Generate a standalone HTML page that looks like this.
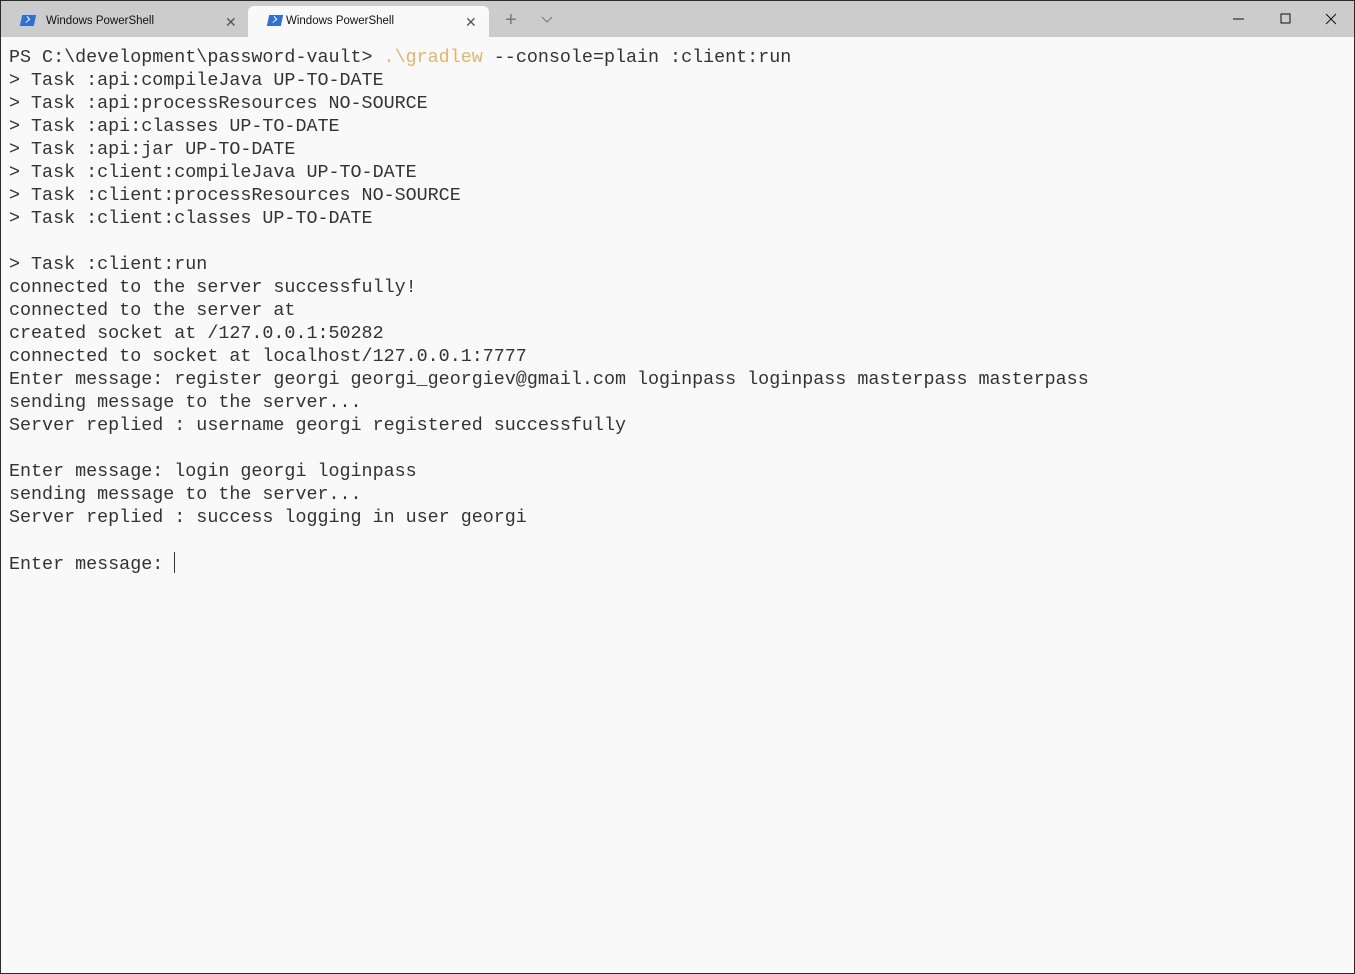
<!DOCTYPE html>
<html><head><meta charset="utf-8"><style>
html,body{margin:0;padding:0}
body{width:1355px;height:974px;position:relative;overflow:hidden;background:#2b2b2b;font-family:"Liberation Sans",sans-serif}
#win{position:absolute;left:1px;top:1px;width:1353px;height:972px;background:#f9f9f9}
#bar{position:absolute;left:0;top:0;width:1353px;height:36px;background:#cccccc}
.tab{position:absolute;top:5px;height:31px;font-size:11.5px;color:#111}
.tab .t{position:absolute;left:45px;top:9px}
.tab .x{position:absolute;top:8px;font-size:14px;color:#555}
#t2{left:247px;width:241px;background:#f9f9f9;border-radius:6px 6px 0 0}
#t1{left:0;width:246px}
.ic{position:absolute;left:20px;top:9px;width:14px;height:11px;background:#2f6fd6;transform:skewX(-12deg)}
.ic:after{content:"";position:absolute;left:3px;top:2px;width:4px;height:4px;border-right:1.5px solid #fff;border-bottom:1.5px solid #fff;transform:rotate(-45deg)}
pre{position:absolute;left:8px;top:45px;margin:0;font-family:"Liberation Mono",monospace;font-size:18.38px;line-height:23px;color:#333}
.y{color:#e1b66b}
.cur{display:inline-block;width:1px;height:21px;background:#333;vertical-align:-4px}
</style></head><body><div id="win">
<div id="bar">
 <div class="tab" id="t1"><div class="ic"></div><span class="t">Windows PowerShell</span><span class="x" style="left:224px">✕</span></div>
 <div class="tab" id="t2"><div class="ic"></div><span class="t" style="left:38px">Windows PowerShell</span><span class="x" style="left:217px">✕</span></div>
 <span style="position:absolute;left:504px;top:8px;font-size:20px;color:#777;font-weight:300">+</span>
 <svg style="position:absolute;left:540px;top:15px" width="12" height="8"><path d="M1 1l5 5 5-5" stroke="#777" fill="none"/></svg>
 <svg style="position:absolute;left:1232px;top:17px" width="12" height="2"><path d="M0 1h11" stroke="#111"/></svg>
 <svg style="position:absolute;left:1279px;top:12px" width="12" height="12"><rect x="1" y="1" width="9" height="9" stroke="#111" fill="none"/></svg>
 <svg style="position:absolute;left:1324px;top:12px" width="12" height="12"><path d="M1 1l10 10M11 1L1 11" stroke="#111"/></svg>
</div>
<pre>PS C:\development\password-vault> <span class="y">.\gradlew</span> --console=plain :client:run
> Task :api:compileJava UP-TO-DATE
> Task :api:processResources NO-SOURCE
> Task :api:classes UP-TO-DATE
> Task :api:jar UP-TO-DATE
> Task :client:compileJava UP-TO-DATE
> Task :client:processResources NO-SOURCE
> Task :client:classes UP-TO-DATE

> Task :client:run
connected to the server successfully!
connected to the server at
created socket at /127.0.0.1:50282
connected to socket at localhost/127.0.0.1:7777
Enter message: register georgi georgi_georgiev@gmail.com loginpass loginpass masterpass masterpass
sending message to the server...
Server replied : username georgi registered successfully

Enter message: login georgi loginpass
sending message to the server...
Server replied : success logging in user georgi

Enter message: <span class="cur"></span></pre>
</div></body></html>
